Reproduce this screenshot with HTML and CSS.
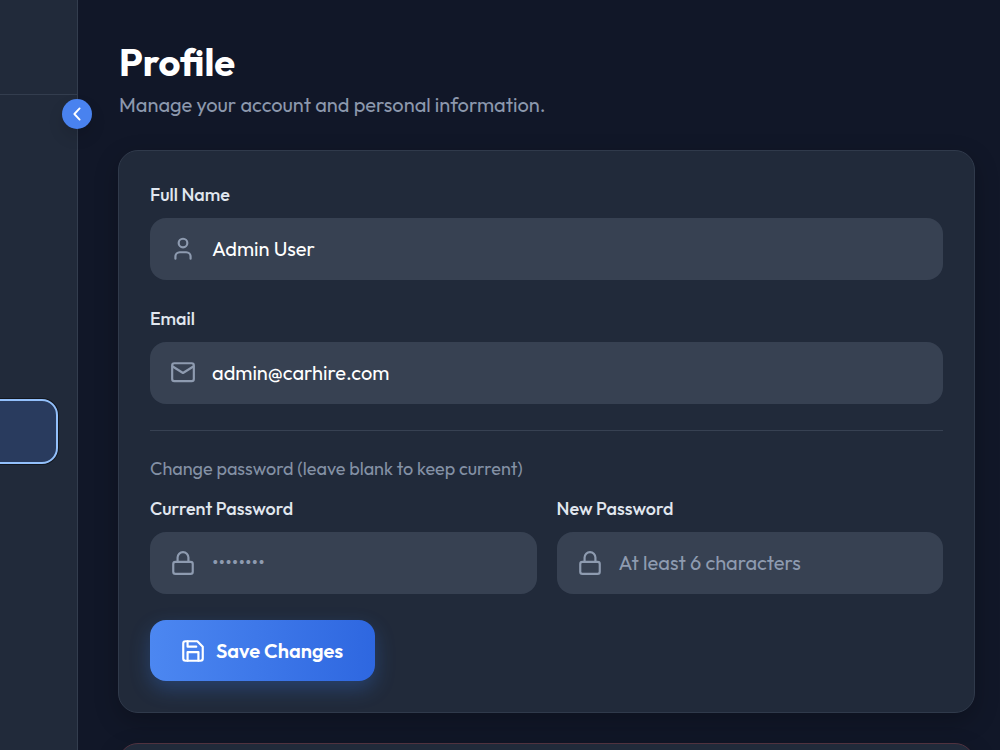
FILE: index.html
```html
<!DOCTYPE html>
<html lang="en">
<head>
<meta charset="utf-8">
<meta name="viewport" content="width=device-width, initial-scale=1">
<title>Profile</title>
<link rel="stylesheet" href="styles.css">
</head>
<body>
<div class="app">
  <aside class="sidebar">
    <div class="sidebar-head"></div>
    <nav class="sidebar-nav" aria-label="Main"><a class="nav-item" href="#profile" aria-label="Profile"></a></nav>
    <button class="toggle" type="button" aria-label="Collapse sidebar">
      <svg class="toggle-icon" viewBox="0 0 24 24"><path d="M15.500 19.500L8.500 12l7-7.500"/></svg>
    </button>
  </aside>
  <main class="main" id="profile">
    <header class="page-head">
      <h1 class="title">Profile</h1>
      <p class="subtitle">Manage your account and personal information.</p>
    </header>
    <form class="card">
      <div class="field">
        <label class="label" for="name">Full Name</label>
        <div class="control">
          <svg class="icon" viewBox="0 0 24 24"><circle cx="12" cy="6.500" r="4"/><path d="M19 21v-2a4 4 0 0 0-4-4H9a4 4 0 0 0-4 4v2"/></svg>
          <input class="input" id="name" type="text" value="Admin User">
        </div>
      </div>
      <div class="field">
        <label class="label" for="email">Email</label>
        <div class="control">
          <svg class="icon" viewBox="0 0 24 24"><rect x="2" y="3" width="20" height="16.500" rx="2"/><path d="M2.500 6L12 12l9.500-6"/></svg>
          <input class="input" id="email" type="email" value="admin@carhire.com">
        </div>
      </div>
      <section class="passwords">
        <p class="hint">Change password (leave blank to keep current)</p>
        <div class="columns">
          <div class="field">
            <label class="label" for="current">Current Password</label>
            <div class="control">
              <svg class="icon" viewBox="0 0 24 24"><rect x="3" y="11" width="18" height="11" rx="2"/><path d="M7 11V7a5 5 0 0 1 10 0V11"/></svg>
              <input class="input" id="current" type="password" placeholder="••••••••">
            </div>
          </div>
          <div class="field">
            <label class="label" for="new">New Password</label>
            <div class="control">
              <svg class="icon" viewBox="0 0 24 24"><rect x="3" y="11" width="18" height="11" rx="2"/><path d="M7 11V7a5 5 0 0 1 10 0V11"/></svg>
              <input class="input" id="new" type="password" placeholder="At least 6 characters">
            </div>
          </div>
        </div>
      </section>
      <button class="save" type="submit">
        <svg class="save-icon" viewBox="0 0 24 24"><path d="M19 21H5a2 2 0 0 1-2-2V5a2 2 0 0 1 2-2h11l5 5v11a2 2 0 0 1-2 2z"/><path d="M17 21v-8H7v8M7 3v5h8"/></svg>
        Save Changes
      </button>
    </form>
    <section class="card card-danger"></section>
  </main>
</div>
</body>
</html>
```
FILE: styles.css
```css
* { box-sizing: border-box; }
body {
  margin: 0;
  background: #111728;
  color: #fff;
  font-family: Outfit, Lato, sans-serif;
}
.app { display: flex; height: 100vh; overflow: hidden; }
.sidebar {
  position: relative;
  flex: 0 0 78px;
  background: #212a3a;
  border-right: 1px solid #333d4e;
}
.sidebar-head { height: 95px; border-bottom: 1px solid #333d4e; }
.sidebar-nav { padding: 304px 19px 0 0; }
.nav-item {
  display: block;
  height: 65px;
  margin-left: -20px;
  border: 2px solid #93c0fb;
  border-radius: 16px;
  background: #293b5e;
  box-shadow: 0 0 0 1px #13171f;
}
.toggle {
  position: absolute;
  top: 99px;
  right: -15px;
  display: grid;
  place-items: center;
  width: 30px;
  height: 30px;
  padding: 0;
  border: 0;
  border-radius: 50%;
  background: #4982ef;
  box-shadow: 0 8px 16px rgba(0, 0, 0, .12);
}
svg { fill: none; stroke-linecap: round; stroke-linejoin: round; }
.toggle-icon { width: 18px; height: 18px; stroke: #fff; stroke-width: 2.5; }
.main { flex: 1; min-width: 0; padding: 38px 25px 0 40px; overflow: hidden; }
.page-head { padding: 0 1px 30px; }
.title { margin: 0; font-size: 38px; line-height: 48px; font-weight: 700; }
.subtitle { margin: 4px 0 0; color: #8c98ad; font-size: 20px; line-height: 30px; }
.card {
  display: flex;
  flex-direction: column;
  align-items: stretch;
  gap: 26px;
  padding: 31px;
  background: #212a3a;
  border: 1px solid #303a4b;
  border-radius: 20px;
  box-shadow: 0 8px 24px rgba(0, 0, 0, .24);
}
.card-danger { min-height: 120px; margin-top: 30px; border-color: #50323f; }
.field { display: flex; flex-direction: column; gap: 10px; min-width: 0; }
.label { color: #e1e7ef; font-size: 18px; line-height: 26px; font-weight: 500; }
.control {
  display: flex;
  align-items: center;
  gap: 16px;
  height: 62px;
  padding: 0 20px;
  background: #374152;
  border-radius: 16px;
}
.icon { flex: none; width: 26px; height: 26px; stroke: #8e9bb0; stroke-width: 2; }
.input {
  flex: 1;
  min-width: 0;
  height: 60px;
  padding: 0 0 2px;
  border: 0;
  outline: 0;
  background: transparent;
  color: #fff;
  font: inherit;
  font-size: 20px;
}
.input::placeholder { color: #8e9bb0; opacity: 1; }
.passwords { padding-top: 25px; border-top: 1px solid #374152; }
.hint { margin: 0 0 14px; color: #8491a5; font-size: 18px; line-height: 26px; }
.columns { display: grid; grid-template-columns: 1fr 1fr; gap: 20px; }
.save {
  display: flex;
  align-items: center;
  justify-content: center;
  align-self: flex-start;
  gap: 10px;
  height: 61px;
  padding: 0 32px 0 30px;
  border: 0;
  border-radius: 16px;
  background: linear-gradient(90deg, #4c87f1, #2e67e0);
  color: #fff;
  font: inherit;
  font-size: 20px;
  font-weight: 600;
  box-shadow: 0 8px 20px rgba(59, 130, 246, .28);
}
.save-icon { width: 26px; height: 26px; stroke: #fff; stroke-width: 2; }
```
